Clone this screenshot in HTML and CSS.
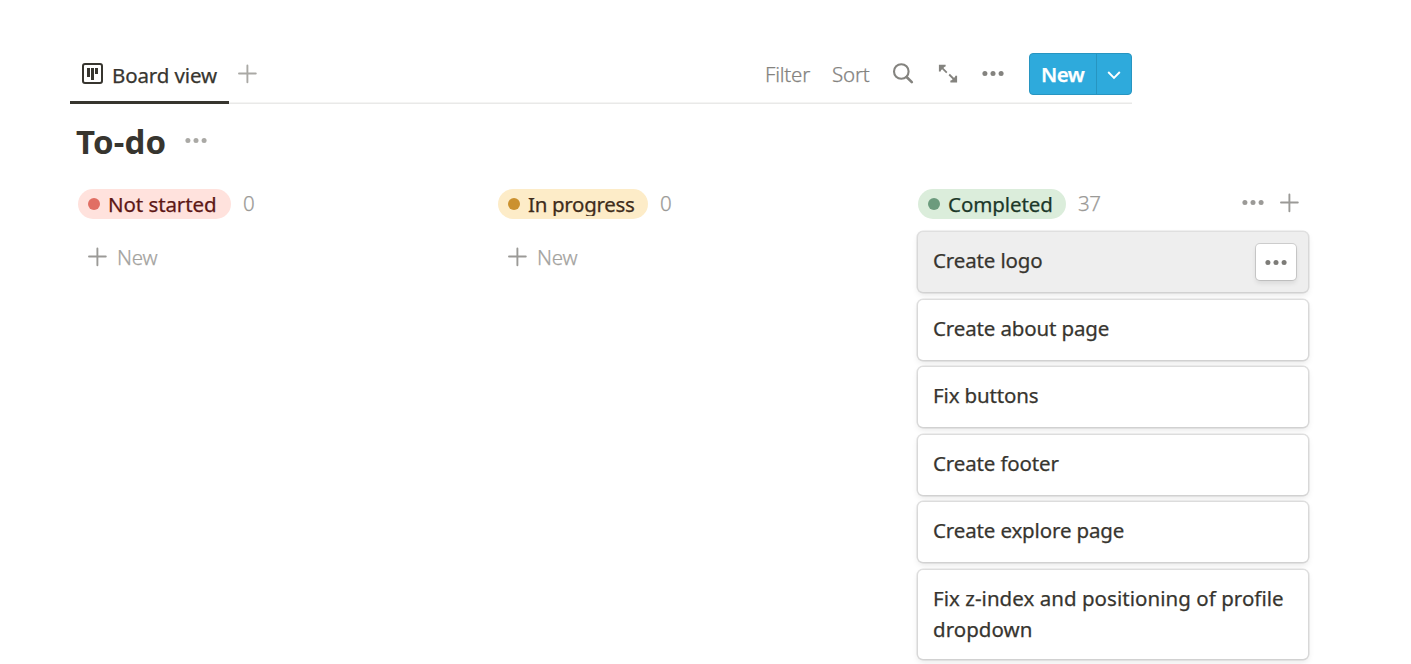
FILE: index.html
```html
<!DOCTYPE html>
<html lang="en">
<head>
<meta charset="utf-8">
<title>To-do</title>
<link rel="stylesheet" href="styles.css">
</head>
<body>
<svg class="defs" aria-hidden="true">
  <symbol id="dots" viewBox="0 0 22 6"><circle cx="2.9" cy="2.600" r="2.5"/><circle cx="11" cy="2.600" r="2.5"/><circle cx="19.1" cy="2.600" r="2.5"/></symbol>
  <symbol id="plus" viewBox="0 0 20 20"><path d="M10.400 1.4v16.800M2 9.500h16.8" fill="none" stroke="currentColor" stroke-width="1.9" stroke-linecap="round"/></symbol>
</svg>
<header class="toolbar">
  <div class="tab">
    <svg class="board-icon" viewBox="0 0 22 22"><rect x="1" y="1" width="19" height="19" rx="2" fill="none" stroke="currentColor" stroke-width="2"/><path d="M5 5h3v9H5zM9 5h3v12H9zM13 5h3v6h-3z" fill="currentColor"/></svg>
    <span class="tab-label">Board view</span>
  </div>
  <svg class="plus add-view"><use href="#plus"/></svg>
  <div class="tools">
    <span class="filter">Filter</span>
    <span class="sort">Sort</span>
    <svg class="search" viewBox="0 0 22 22"><circle cx="9.300" cy="8.500" r="7.300" fill="none" stroke="currentColor" stroke-width="2.1"/><path d="M14.6 14l5.200 5.200" stroke="currentColor" stroke-width="2.6" stroke-linecap="round"/></svg>
    <svg class="expand" viewBox="0 0 20 20" fill="none" stroke="currentColor" stroke-width="1.8"><path d="M1.800 7.500V1.700h5.800M1.800 1.700l7 7M18.200 11.700v5.800h-5.800M18.200 17.500l-7-7"/></svg>
    <svg class="dots"><use href="#dots"/></svg>
  </div>
  <div class="new-button">
    <span class="new-label">New</span>
    <span class="chevron"><svg viewBox="0 0 14 10"><path d="M1.2 2l5.800 5.800L12.800 2" fill="none" stroke="currentColor" stroke-width="1.9"/></svg></span>
  </div>
</header>
<div class="title-row">
  <h1>To-do</h1>
  <svg class="dots"><use href="#dots"/></svg>
</div>
<main class="board">
  <section class="column">
    <div class="column-head"><span class="pill red"><i class="dot"></i><span class="status">Not started</span></span><span class="count">0</span></div>
    <div class="new-row"><svg class="plus"><use href="#plus"/></svg><span>New</span></div>
  </section>
  <section class="column">
    <div class="column-head"><span class="pill yellow"><i class="dot"></i><span class="status">In progress</span></span><span class="count">0</span></div>
    <div class="new-row"><svg class="plus"><use href="#plus"/></svg><span>New</span></div>
  </section>
  <section class="column">
    <div class="column-head"><span class="pill green"><i class="dot"></i><span class="status">Completed</span></span><span class="count">37</span>
      <svg class="dots column-menu"><use href="#dots"/></svg><svg class="plus"><use href="#plus"/></svg></div>
    <div class="cards">
      <article class="card hovered"><span>Create logo</span><span class="card-menu"><svg class="dots"><use href="#dots"/></svg></span></article>
      <article class="card">Create about page</article>
      <article class="card">Fix buttons</article>
      <article class="card">Create footer</article>
      <article class="card">Create explore page</article>
      <article class="card tall">Fix z-index and positioning of profile dropdown</article>
      <article class="card"></article>
    </div>
  </section>
</main>
</body>
</html>
```
FILE: styles.css
```css
* { box-sizing: border-box; }
html, body { height: 664px; overflow: hidden; }
body { margin: 0; padding: 47px 0 0 70px; background: #fff; color: #37352f; font: 350 20.500px/30px "Noto Sans", "Open Sans", sans-serif; letter-spacing: -0.2px; white-space: nowrap; -webkit-text-stroke: 0.25px currentColor; }
svg { display: block; flex: none; fill: currentColor; }
.defs { width: 0; height: 0; position: absolute; }
.dots { width: 22px; height: 6px; }
.plus { width: 20px; height: 20px; }
.toolbar { display: flex; width: 1062px; height: 57px; align-items: flex-start; box-shadow: inset 0 -1.500px #e9e9e8; }
.tab { display: flex; width: 159px; height: 57px; padding: 13px 0 0 11px; border-bottom: 3px solid #37352f; gap: 9px; font-weight: 450; letter-spacing: -0.12px; }
.board-icon { width: 22px; height: 22px; margin: 3px -1px 0 1px; }
.add-view { margin: 17px 0 0 8px; color: #aaa9a5; }
.tools { display: flex; margin-left: auto; padding-top: 12px; color: #84837f; }
.filter { width: 67px; }
.sort { width: 60px; }
.search { width: 22px; height: 22px; margin-top: 4px; }
.expand { width: 20px; height: 20px; margin: 5px 0 0 24px; }
.tools .dots { margin: 12px 0 0 24px; }
.new-button { display: flex; width: 103px; height: 42px; margin: 6px 0 0 25px; background: #2eaadc; border: 1px solid #2795c1; border-radius: 4px; color: #fff; }
.new-label { width: 67px; padding: 5px 0 0 11px; font-weight: 600; letter-spacing: -0.5px; border-right: 1px solid #2795c1; }
.chevron { padding: 16px 0 0 10px; }
.chevron svg { width: 14px; height: 10px; }
.title-row { display: flex; padding-left: 7px; height: 85px; color: #aaa9a5; }
h1 { margin: 15px 0 0 -1px; width: 109px; color: #37352f; font-size: 33px; line-height: 45px; font-weight: 700; letter-spacing: 0.2px; -webkit-text-stroke: 0; }
.title-row .dots { margin-top: 34px; }
.board { display: grid; grid-template-columns: 420px 420px 390px; padding-left: 8px; }
.column-head { display: flex; height: 30px; align-items: center; color: #9b9a97; }
.pill { display: flex; align-items: center; height: 30px; border-radius: 15px; padding-left: 10px; font-weight: 450; letter-spacing: -0.08px; }
.dot { width: 12px; height: 12px; border-radius: 50%; margin-right: 8px; }
.status { overflow: hidden; height: 27px; line-height: 30px; margin-bottom: 3px; }
.red { width: 153px; background: #ffe2dd; color: #5d1715; }
.red .dot { background: #e16f64; }
.yellow { width: 150px; background: #fdecc8; color: #402c1b; letter-spacing: -0.3px; }
.yellow .dot { background: #cb912f; }
.green { width: 148px; background: #dbeddb; color: #1c3829; }
.green .dot { background: #6c9b7d; }
.count { margin-left: 12px; margin-bottom: 2px; letter-spacing: -0.5px; }
.column-menu { margin-left: auto; margin-right: 15px; margin-bottom: 3px; }
.column-head > .plus { margin-right: 9px; margin-bottom: 2px; }
.new-row { display: flex; align-items: center; gap: 10px; padding: 23px 0 0 9px; color: #a3a29e; }
.new-row .plus { margin-bottom: 1px; color: #9b9a97; }
.cards { display: grid; gap: 7.500px; margin: 13px 0 0; }
.card { height: 60px; padding: 13px 15px; line-height: 31px; background: #fff; border-radius: 5px; box-shadow: 0 0 0 1.500px rgba(15,15,15,.12), 0 3px 6px rgba(15,15,15,.1); font-weight: 450; letter-spacing: -0.14px; white-space: normal; }
.hovered { display: flex; justify-content: space-between; background: #eee; padding-right: 12px; }
.card-menu { display: grid; place-items: center; width: 40px; height: 36px; margin-top: -1px; background: #fff; border-radius: 4px; color: #7d7c78; box-shadow: 0 0 0 1px rgba(15,15,15,.14), 0 3px 5px rgba(15,15,15,.1); }
.card-menu .dots { margin-top: 2px; }
.tall { height: 89px; letter-spacing: 0.04px; }
```
